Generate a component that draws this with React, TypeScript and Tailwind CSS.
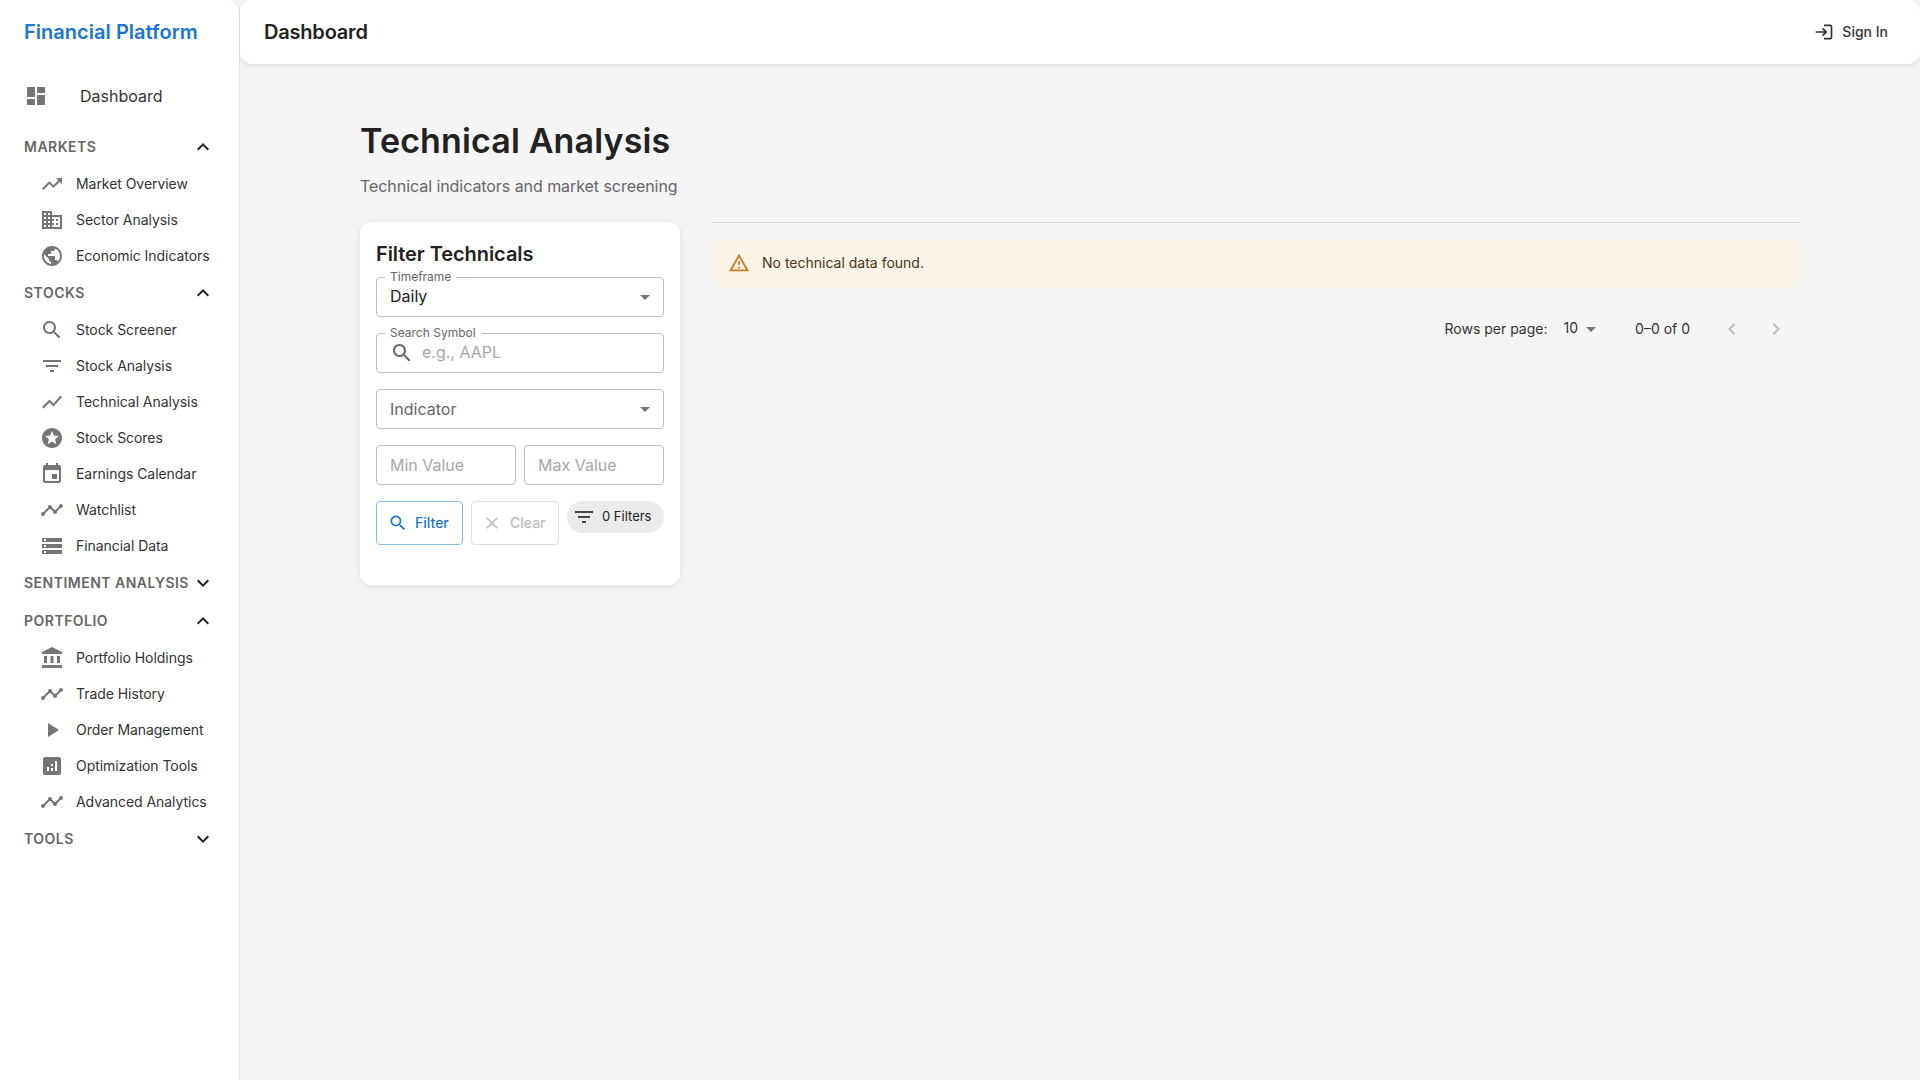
const icons = {
  dashboard: "M3 13h8V3H3v10zm0 8h8v-6H3v6zm10 0h8V11h-8v10zm0-18v6h8V3h-8z",
  expandLess: "m12 8-6 6 1.41 1.41L12 10.83l4.59 4.58L18 14z",
  expandMore: "M16.59 8.59 12 13.17 7.41 8.59 6 10l6 6 6-6z",
  trendingUp: "m16 6 2.29 2.29-4.88 4.88-4-4L2 16.59 3.41 18l6-6 4 4 6.3-6.29L22 12V6z",
  business:
    "M12 7V3H2v18h20V7H12zM6 19H4v-2h2v2zm0-4H4v-2h2v2zm0-4H4V9h2v2zm0-4H4V5h2v2zm4 12H8v-2h2v2zm0-4H8v-2h2v2zm0-4H8V9h2v2zm0-4H8V5h2v2zm10 12h-8v-2h2v-2h-2v-2h2v-2h-2V9h8v10zm-2-8h-2v2h2v-2zm0 4h-2v2h2v-2z",
  public:
    "M12 2C6.48 2 2 6.48 2 12s4.48 10 10 10 10-4.48 10-10S17.52 2 12 2zm-1 17.93c-3.95-.49-7-3.85-7-7.93 0-.62.08-1.21.21-1.79L9 15v1c0 1.1.9 2 2 2v1.93zm6.9-2.54c-.26-.81-1-1.39-1.9-1.39h-1v-3c0-.55-.45-1-1-1H8v-2h2c.55 0 1-.45 1-1V7h2c1.1 0 2-.9 2-2v-.41c2.93 1.19 5 4.06 5 7.41 0 2.08-.8 3.97-2.1 5.39z",
  search:
    "M15.5 14h-.79l-.28-.27C15.41 12.59 16 11.11 16 9.5 16 5.91 13.09 3 9.5 3S3 5.91 3 9.5 5.91 16 9.5 16c1.61 0 3.09-.59 4.23-1.57l.27.28v.79l5 4.99L20.49 19l-4.99-5zm-6 0C7.01 14 5 11.99 5 9.5S7.01 5 9.5 5 14 7.01 14 9.5 11.99 14 9.5 14z",
  filterList: "M10 18h4v-2h-4v2zM3 6v2h18V6H3zm3 7h12v-2H6v2z",
  showChart: "m3.5 18.49 6-6.01 4 4L22 6.92l-1.41-1.41-7.09 7.97-4-4L2 16.99z",
  stars:
    "M11.99 2C6.47 2 2 6.48 2 12s4.47 10 9.99 10C17.52 22 22 17.52 22 12S17.52 2 11.99 2zm4.24 16L12 15.45 7.77 18l1.12-4.81-3.73-3.23 4.92-.42L12 5l1.92 4.53 4.92.42-3.73 3.23L16.23 18z",
  event:
    "M17 12h-5v5h5v-5zM16 1v2H8V1H6v2H5c-1.11 0-1.99.9-1.99 2L3 19c0 1.1.89 2 2 2h14c1.1 0 2-.9 2-2V5c0-1.1-.9-2-2-2h-1V1h-2zm3 18H5V8h14v11z",
  timeline:
    "M23 8c0 1.1-.9 2-2 2-.18 0-.35-.02-.51-.07l-3.56 3.55c.05.16.07.34.07.52 0 1.1-.9 2-2 2s-2-.9-2-2c0-.18.02-.36.07-.52l-2.55-2.55c-.16.05-.34.07-.52.07s-.36-.02-.52-.07l-4.55 4.56c.05.16.07.33.07.51 0 1.1-.9 2-2 2s-2-.9-2-2 .9-2 2-2c.18 0 .35.02.51.07l4.56-4.55C8.02 9.36 8 9.18 8 9c0-1.1.9-2 2-2s2 .9 2 2c0 .18-.02.36-.07.52l2.55 2.55c.16-.05.34-.07.52-.07s.36.02.52.07l3.55-3.56C19.02 8.35 19 8.18 19 8c0-1.1.9-2 2-2s2 .9 2 2z",
  storage:
    "M2 20h20v-4H2v4zm2-3h2v2H4v-2zM2 4v4h20V4H2zm4 3H4V5h2v2zm-4 7h20v-4H2v4zm2-3h2v2H4v-2z",
  bank: "M4 10h3v7H4zm6.5 0h3v7h-3zM2 19h20v3H2zm15-9h3v7h-3zm-5-9L2 6v2h20V6z",
  play: "M8 5v14l11-7z",
  assessment:
    "M19 3H5c-1.1 0-2 .9-2 2v14c0 1.1.9 2 2 2h14c1.1 0 2-.9 2-2V5c0-1.1-.9-2-2-2zM9 17H7v-4h2v4zm4 0h-2v-3h2v3zm0-5h-2v-2h2v2zm4 5h-2V7h2v10z",
  login:
    "M11 7 9.6 8.4l2.6 2.6H2v2h10.2l-2.6 2.6L11 17l5-5-5-5zm9 12h-8v2h8c1.1 0 2-.9 2-2V5c0-1.1-.9-2-2-2h-8v2h8v14z",
  warning: "M12 5.99 19.53 19H4.47L12 5.99M12 2 1 21h22L12 2zm1 14h-2v2h2v-2zm0-6h-2v4h2v-4z",
  clear:
    "M19 6.41 17.59 5 12 10.59 6.41 5 5 6.41 10.59 12 5 17.59 6.41 19 12 13.41 17.59 19 19 17.59 13.41 12z",
  dropDown: "m7 10 5 5 5-5z",
  left: "M15.41 16.59 10.83 12l4.58-4.59L14 6l-6 6 6 6 1.41-1.41z",
  right: "M8.59 16.59 13.17 12 8.59 7.41 10 6l6 6-6 6-1.41-1.41z",
};

const Icon = ({ d, className }: { d: string; className: string }) => (
  <svg viewBox="0 0 24 24" fill="currentColor" className={className}>
    <path d={d} />
  </svg>
);

const navSections = [
  {
    title: "MARKETS",
    open: true,
    items: [
      ["Market Overview", icons.trendingUp],
      ["Sector Analysis", icons.business],
      ["Economic Indicators", icons.public],
    ],
  },
  {
    title: "STOCKS",
    open: true,
    items: [
      ["Stock Screener", icons.search],
      ["Stock Analysis", icons.filterList],
      ["Technical Analysis", icons.showChart],
      ["Stock Scores", icons.stars],
      ["Earnings Calendar", icons.event],
      ["Watchlist", icons.timeline],
      ["Financial Data", icons.storage],
    ],
  },
  { title: "SENTIMENT ANALYSIS", open: false, items: [] },
  {
    title: "PORTFOLIO",
    open: true,
    items: [
      ["Portfolio Holdings", icons.bank],
      ["Trade History", icons.timeline],
      ["Order Management", icons.play],
      ["Optimization Tools", icons.assessment],
      ["Advanced Analytics", icons.timeline],
    ],
  },
  { title: "TOOLS", open: false, items: [] },
];

const Sidebar = () => (
  <aside className="w-[240px] shrink-0 bg-white border-r border-[#e0e0e0] rounded-tr-xl">
    <div className="h-[64px] pl-6 flex items-center text-[20px] font-semibold tracking-[0.03px] text-[#1976d2]">
      Financial Platform
    </div>
    <div className="mt-2 h-12 pl-6 flex items-center text-[16px] text-[#333]">
      <Icon d={icons.dashboard} className="w-6 h-6 mr-8 text-[#757575]" />
      Dashboard
    </div>
    <nav className="mt-2">
      {navSections.map((section) => (
        <div key={section.title}>
          <div className="h-[38px] pl-6 pr-[24px] flex items-center justify-between">
            <span className="-mt-[1px] text-[14px] font-semibold tracking-[0.035em] whitespace-nowrap text-[#666]">
              {section.title}
            </span>
            <Icon
              d={section.open ? icons.expandLess : icons.expandMore}
              className="w-6 h-6 text-[#222]"
            />
          </div>
          {section.items.map(([label, d]) => (
            <div
              key={label}
              className="h-9 pl-10 flex items-center text-[14px] tracking-[-0.05px] text-[#333]"
            >
              <Icon d={d} className="w-6 h-6 mr-3 text-[#757575]" />
              <span className="-mt-[1px]">{label}</span>
            </div>
          ))}
        </div>
      ))}
    </nav>
  </aside>
);

const Field = ({
  label,
  children,
  className = "",
}: {
  label?: string;
  children: React.ReactNode;
  className?: string;
}) => (
  <div
    className={`relative h-10 border border-[#bdbdbd] rounded-[4px] flex items-center pl-[13px] pr-2 ${className}`}
  >
    {label && (
      <span className="absolute left-[8px] -top-[9px] bg-white px-[5px] text-[12px] leading-[16px] text-[#666]">
        {label}
      </span>
    )}
    {children}
  </div>
);

const FilterCard = () => (
  <div className="w-[320px] h-[363px] shrink-0 bg-white rounded-xl shadow-[0_2px_8px_rgba(0,0,0,0.08)] p-4">
    <h2 className="text-[20px] leading-[32px] font-semibold tracking-[-0.07px] text-[#222] mb-[7px]">
      Filter Technicals
    </h2>
    <Field label="Timeframe" className="justify-between mb-4">
      <span className="-mt-[2px] text-[16px] text-[#222]">Daily</span>
      <Icon d={icons.dropDown} className="w-6 h-6 -mr-[2px] text-[#757575]" />
    </Field>
    <Field label="Search Symbol" className="mb-4">
      <Icon d={icons.search} className="w-6 h-6 mr-2 text-[#666]" />
      <span className="-mt-[2px] text-[16px] text-[#a8a8a8]">e.g., AAPL</span>
    </Field>
    <Field className="justify-between mb-4">
      <span className="text-[16px] text-[#666]">Indicator</span>
      <Icon d={icons.dropDown} className="w-6 h-6 -mr-[2px] text-[#757575]" />
    </Field>
    <div className="flex gap-2 mb-4">
      <Field className="flex-1">
        <span className="text-[16px] text-[#a8a8a8]">Min Value</span>
      </Field>
      <Field className="flex-1">
        <span className="text-[16px] text-[#a8a8a8]">Max Value</span>
      </Field>
    </div>
    <div className="flex gap-2 items-start">
      <div className="w-[87px] h-11 border border-[#8cbbe9] rounded-[4px] flex items-center pl-[11px] text-[14px] font-medium text-[#1976d2]">
        <Icon d={icons.search} className="w-5 h-5 mr-2" />
        <span className="-mt-[1px] -ml-[1px]">Filter</span>
      </div>
      <div className="w-[88px] h-11 border border-[#e0e0e0] rounded-[4px] flex items-center pl-[10px] text-[14px] font-medium text-[#bdbdbd]">
        <Icon d={icons.clear} className="w-5 h-5 mr-2" />
        <span className="-mt-[1px]">Clear</span>
      </div>
      <div className="w-[97px] h-8 bg-[#ebebeb] rounded-full flex items-center pl-[5px] text-[13px] text-[#222]">
        <Icon d={icons.filterList} className="w-6 h-6 mr-[6px] text-[#444]" />
        0 Filters
      </div>
    </div>
  </div>
);

const ResultsPanel = () => (
  <div className="flex-1 min-w-0">
    <div className="border-t border-[#d9d9d9] mb-4" />
    <div className="h-12 bg-[#faf3e8] rounded-xl flex items-center pl-4 text-[14px] text-[#4a3410]">
      <Icon d={icons.warning} className="w-[22px] h-[22px] mr-3 text-[#c77c1e]" />
      <span className="-mt-[1px]">No technical data found.</span>
    </div>
    <div className="mt-4 h-[52px] flex items-center justify-end pr-[2px] text-[14px] text-[#333]">
      <span className="-mt-[1px]">Rows per page:</span>
      <span className="ml-4 -mt-[3px] text-[#333]">10</span>
      <Icon d={icons.dropDown} className="w-6 h-6 ml-[1px] text-[#757575]" />
      <span className="ml-[32px] -mt-[1px]">0–0 of 0</span>
      <div className="ml-[20px] flex items-center">
        <div className="w-11 h-10 flex items-center justify-center">
          <Icon d={icons.left} className="w-6 h-6 text-[#bdbdbd]" />
        </div>
        <div className="w-11 h-10 flex items-center justify-center">
          <Icon d={icons.right} className="w-6 h-6 text-[#bdbdbd]" />
        </div>
      </div>
    </div>
  </div>
);

export default function App() {
  return (
    <div className="flex h-screen overflow-hidden bg-[#f5f5f5] font-['Inter',sans-serif]">
      <Sidebar />
      <div className="flex-1 min-w-0">
        <header className="h-[64px] bg-white rounded-xl shadow-[0_2px_4px_rgba(0,0,0,0.08)] flex items-center justify-between pl-6 pr-8">
          <h1 className="text-[20px] font-semibold tracking-[-0.2px] text-[#222]">Dashboard</h1>
          <div className="flex items-center text-[14px] font-medium text-[#333]">
            <Icon d={icons.login} className="w-5 h-5 mr-2" />
            <span className="-mt-[1px]">Sign In</span>
          </div>
        </header>
        <main className="pt-[56px] pl-[120px] pr-[120px]">
          <h2 className="text-[34px] leading-[42px] font-semibold tracking-[0.14px] text-[#222] mb-3">
            Technical Analysis
          </h2>
          <p className="text-[16px] leading-[24px] tracking-[-0.06px] text-[#666] mb-6">
            Technical indicators and market screening
          </p>
          <div className="flex gap-8 items-start">
            <FilterCard />
            <ResultsPanel />
          </div>
        </main>
      </div>
    </div>
  );
}
